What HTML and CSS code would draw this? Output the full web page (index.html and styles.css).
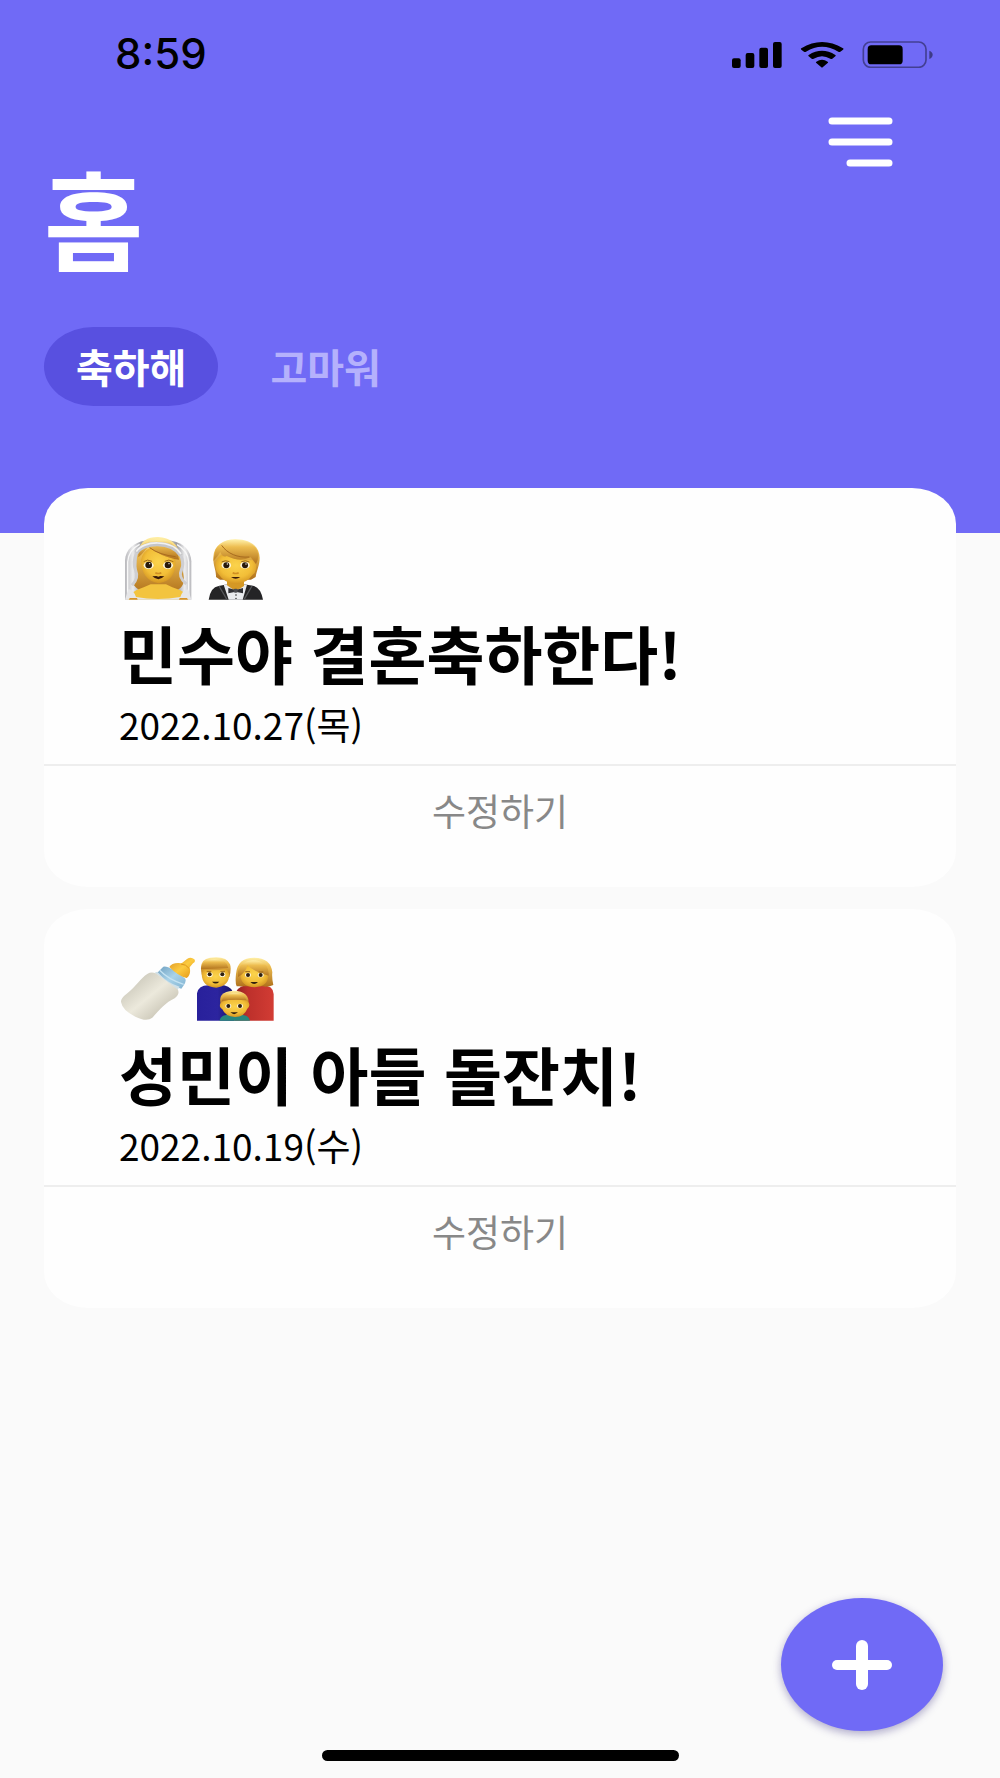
FILE: index.html
```
<!DOCTYPE html>
<html lang="ko">
<head>
  <meta charset="UTF-8">
  <meta name="viewport" content="width=device-width, initial-scale=1.0">
  <title>홈</title>
  <link rel="stylesheet" href="styles.css">
</head>
<body>
  <header class="header">
    <div class="status-bar">
      <span class="time">8:59</span>
      <div class="status-icons">
        <svg width="50" height="27" viewBox="95 62 150 81" aria-hidden="true">
          <rect x="95" y="114" width="26" height="29" rx="6"/>
          <rect x="136" y="98" width="26" height="45" rx="6"/>
          <rect x="177" y="82" width="26" height="61" rx="6"/>
          <rect x="218" y="65" width="26" height="78" rx="6"/>
        </svg>
        <svg width="44" height="27" viewBox="299 62 132 81" aria-hidden="true">
          <path d="M303 84 Q365 46 428 84 Q431 86 428 88 L420 94 Q417 96 414 94 Q365 65 317 94 Q314 96 311 94 L303 88 Q300 86 303 84Z"/>
          <path d="M325 104 Q365 79 405 104 Q408 106 405 108 L396 115 Q393 117 390 115 Q365 100 340 115 Q337 117 334 115 L325 108 Q322 106 325 104Z"/>
          <path d="M348 124 Q365 112 382 124 Q385 126 382 128 L367 141 Q365 143 363 141 L348 128 Q345 126 348 124Z"/>
        </svg>
        <svg width="71" height="27" viewBox="485 62 213 81" aria-hidden="true">
          <rect x="489" y="65" width="188" height="76" rx="22" fill="none" stroke="#000" stroke-opacity=".4" stroke-width="5"/>
          <path d="M687 91 Q697 95 697 103 Q697 111 687 116Z" fill-opacity=".45"/>
          <rect x="502" y="75" width="105" height="57" rx="11"/>
        </svg>
      </div>
    </div>
    <div class="menu-row">
      <button class="menu-button" type="button" aria-label="메뉴">
        <svg width="66" height="52" viewBox="0 0 66 52" fill="none" stroke="#fff" stroke-width="7" stroke-linecap="round">
          <path d="M5 5H62M5 26H62M23 47H62"/>
        </svg>
      </button>
    </div>
    <h1 class="title">홈</h1>
    <nav class="tabs">
      <button class="tab active" type="button">축하해</button>
      <button class="tab" type="button">고마워</button>
    </nav>
  </header>

  <main class="cards">
    <article class="card">
      <div class="card-body">
        <div class="emoji">
          <svg width="74" height="64" viewBox="27 48 222 192" aria-hidden="true">
            <defs>
              <radialGradient id="skin" cx=".5" cy=".4" r=".65">
                <stop offset="0" stop-color="#fbd34c"/>
                <stop offset=".6" stop-color="#f2be38"/>
                <stop offset="1" stop-color="#cb8a1d"/>
              </radialGradient>
              <linearGradient id="hair" x1="0" y1="0" x2="0" y2="1">
                <stop offset="0" stop-color="#fff0a8"/>
                <stop offset=".3" stop-color="#edbd50"/>
                <stop offset="1" stop-color="#b0711c"/>
              </linearGradient>
              <linearGradient id="veil" x1="0" y1="0" x2="1" y2="0">
                <stop offset="0" stop-color="#b9b9bd"/>
                <stop offset=".12" stop-color="#ececed"/>
                <stop offset=".25" stop-color="#9c9ca1"/>
                <stop offset=".5" stop-color="#ededee"/>
                <stop offset=".78" stop-color="#9c9ca1"/>
                <stop offset=".9" stop-color="#ededee"/>
                <stop offset="1" stop-color="#b9b9bd"/>
              </linearGradient>
            </defs>
            <path d="M45 239V122C46 87 73 67 104 62H184C219 67 243 91 244 124V239Z" fill="url(#veil)"/>
            <path d="M53 227V126Q56 89 89 73M236 227V126Q234 92 201 74" fill="none" stroke="#f8f8f8" stroke-width="4"/>
            <path d="M84 96C91 61 116 50 145 51C179 52 207 73 211 110C213 146 234 184 211 204C195 218 169 224 147 223C116 224 87 216 72 196C84 178 76 126 84 96Z" fill="url(#hair)"/>
            <path d="M52 239Q60 215 101 202L122 193H168L187 202Q231 215 239 239Z" fill="#f3c43f"/>
            <path d="M93 120Q98 93 122 83Q153 109 196 117Q202 181 146 190Q94 181 93 120Z" fill="url(#skin)"/>
            <path d="M85 112C100 99 108 89 114 80C140 99 169 113 207 119Q203 74 168 60Q109 53 85 88Z" fill="url(#hair)"/>
            <path d="M119 83Q148 105 197 110" fill="none" stroke="#a96b1e" stroke-width="3"/>
            <path d="M79 99C99 64 184 60 213 106" fill="none" stroke="#c5c6c9" stroke-width="13"/>
            <path d="M79 95C99 61 184 57 213 102" fill="none" stroke="#f1f1f1" stroke-width="5"/>
            <path d="M80 98Q67 128 77 151T66 196M212 106Q224 129 214 150T229 192" fill="none" stroke="#cfcfd2" stroke-width="9"/>
            <path d="M45 239L55 208Q69 207 78 231Q143 243 211 231Q220 206 235 209L244 239Z" fill="#e6e6e8"/>
            <path d="M57 239L59 234H81L83 239ZM207 239L209 234H231L234 239Z" fill="#d8952b"/>
            <path d="M101 125Q112 116 126 124M164 124Q176 116 190 125" fill="none" stroke="#9c681b" stroke-width="3"/>
            <ellipse cx="116" cy="136" rx="15" ry="11" fill="#fff8dd"/>
            <ellipse cx="174" cy="136" rx="15" ry="11" fill="#fff8dd"/>
            <circle cx="116" cy="135" r="10" fill="#28190a"/>
            <circle cx="174" cy="135" r="10" fill="#28190a"/>
            <circle cx="119" cy="131" r="2" fill="#fff"/>
            <circle cx="177" cy="131" r="2" fill="#fff"/>
            <path d="M136 158Q145 163 154 158" fill="none" stroke="#d08f22" stroke-width="5"/>
            <path d="M127 169L139 168L145 170L151 168L163 169Q145 186 127 169Z" fill="#391a08"/>
          </svg>
          <svg width="72" height="64" viewBox="249 48 216 192" aria-hidden="true">
            <path d="M296 239Q302 201 326 198L352 193H402L429 197Q452 202 459 239Z" fill="#242426"/>
            <path d="M341 194L377 190L411 194L398 239H356Z" fill="#e9ebef"/>
            <path d="M351 181H402V198L377 214L351 196Z" fill="#d49825"/>
            <path d="M327 198L351 239M426 198L402 239" stroke="#55565a" stroke-width="4"/>
            <path d="M355 204L374 209V216L355 220ZM399 204L380 209V216L399 220Z" fill="#303136"/>
            <rect x="371" y="206" width="12" height="12" rx="4" fill="#4a4b50"/>
            <circle cx="378" cy="225" r="2"/>
            <circle cx="378" cy="235" r="2"/>
            <path d="M310 112C312 75 340 58 377 58C421 58 448 79 449 113C449 136 440 150 437 171L423 179H330L318 171C319 151 309 137 310 112Z" fill="url(#hair)"/>
            <path d="M317 127Q320 115 333 105L344 99Q383 124 428 120L439 134Q440 156 428 164Q410 190 377 192Q342 188 327 164Q314 151 317 127Z" fill="url(#skin)"/>
            <path d="M310 123Q324 109 331 96Q338 114 350 108Q390 128 422 112L438 132Q453 103 436 82Q415 59 374 59Q327 62 316 91Z" fill="url(#hair)"/>
            <path d="M335 76C352 101 383 114 418 111" fill="none" stroke="#a76b1f" stroke-width="3"/>
            <path d="M335 126Q346 119 358 125M394 125Q407 119 418 126" fill="none" stroke="#93631d" stroke-width="3"/>
            <ellipse cx="349" cy="136" rx="14" ry="10" fill="#fff8dd"/>
            <ellipse cx="405" cy="136" rx="14" ry="10" fill="#fff8dd"/>
            <circle cx="349" cy="136" r="9" fill="#28190a"/>
            <circle cx="405" cy="136" r="9" fill="#28190a"/>
            <circle cx="352" cy="132" r="2" fill="#fff"/>
            <circle cx="408" cy="132" r="2" fill="#fff"/>
            <path d="M368 158Q377 163 386 158" fill="none" stroke="#d08f22" stroke-width="5"/>
            <path d="M363 171H391Q377 182 363 171Z" fill="#391a08"/>
          </svg>
        </div>
        <h2 class="card-title">민수야 결혼축하한다!</h2>
        <p class="date">2022.10.27(목)</p>
      </div>
      <button class="edit" type="button">수정하기</button>
    </article>

    <article class="card">
      <div class="card-body">
        <div class="emoji">
          <svg width="76" height="64" viewBox="27 36 228 192" aria-hidden="true">
            <defs>
              <linearGradient id="milk" x1="0" y1="0" x2="1" y2="1">
                <stop offset="0" stop-color="#bbb8aa"/>
                <stop offset=".5" stop-color="#ece9dc"/>
                <stop offset="1" stop-color="#b5b09f"/>
              </linearGradient>
              <linearGradient id="ring" x1="0" y1="0" x2="1" y2="1">
                <stop offset="0" stop-color="#6e9fc0"/>
                <stop offset=".5" stop-color="#a9d3e9"/>
                <stop offset="1" stop-color="#80b2d1"/>
              </linearGradient>
              <linearGradient id="nipple" x1="0" y1="0" x2="1" y2="1">
                <stop offset="0" stop-color="#d99022"/>
                <stop offset=".5" stop-color="#fccb40"/>
                <stop offset="1" stop-color="#e08f10"/>
              </linearGradient>
            </defs>
            <path d="M142 83L160 65Q176 60 226 101Q231 109 214 131Q182 125 142 83Z" fill="url(#ring)"/>
            <path d="M134 83L142 80Q168 112 209 125L203 134Z" fill="#cfe0e8"/>
            <path d="M113 86Q124 80 137 85L203 133Q211 147 194 160C167 172 151 193 127 218Q110 232 76 215Q37 196 33 171Q32 160 52 145C80 122 91 100 113 86Z" fill="url(#milk)"/>
            <path d="M149 76Q177 105 221 118" fill="none" stroke="#c5e3f2" stroke-width="4"/>
            <path d="M178 66Q187 51 215 55L231 42Q243 34 253 43Q258 50 249 55L239 67Q244 89 230 99Q204 93 178 66Z" fill="url(#nipple)"/>
            <path d="M213 57Q229 58 237 70" fill="none" stroke="#dc951a" stroke-width="3"/>
          </svg>
          <svg width="80" height="64" viewBox="255 36 240 192" aria-hidden="true">
            <defs>
              <linearGradient id="blue" x1="0" y1="0" x2="1" y2="0">
                <stop offset="0" stop-color="#28209b"/>
                <stop offset=".55" stop-color="#2c249f"/>
                <stop offset="1" stop-color="#15125f"/>
              </linearGradient>
              <linearGradient id="red" x1="0" y1="0" x2="1" y2="0">
                <stop offset="0" stop-color="#8c1e20"/>
                <stop offset=".35" stop-color="#bd302b"/>
                <stop offset="1" stop-color="#d23c34"/>
              </linearGradient>
            </defs>
            <path d="M261 227V145Q266 120 297 121H342Q370 126 373 157V227Z" fill="url(#blue)"/>
            <path d="M373 227V158Q377 125 408 121H457Q490 122 491 147V227Z" fill="url(#red)"/>
            <path d="M275 87Q265 43 300 38Q349 31 360 58Q365 71 358 96H278Z" fill="url(#hair)"/>
            <path d="M279 73Q310 79 350 72L358 88Q357 124 319 128Q276 126 275 87Z" fill="url(#skin)"/>
            <path d="M273 73Q310 71 355 69Q351 43 314 42Q274 42 273 73Z" fill="url(#hair)"/>
            <path d="M380 124Q375 114 378 87Q382 38 432 38Q483 39 487 82Q485 98 490 120Q475 127 458 124Z" fill="url(#hair)"/>
            <path d="M391 89Q396 68 414 60Q435 83 474 91Q476 123 434 127Q392 124 391 89Z" fill="url(#skin)"/>
            <path d="M384 96Q408 83 412 61Q434 81 476 92Q479 59 447 48Q398 38 384 78Z" fill="url(#hair)"/>
            <path d="M328 227Q334 209 352 210H400Q417 212 420 227Z" fill="#28877d"/>
            <path d="M333 180Q320 140 370 137Q421 138 415 179Z" fill="url(#hair)"/>
            <path d="M332 173Q344 163 360 165Q385 162 410 166Q425 180 412 191Q402 217 374 216Q346 215 337 193Q325 185 332 173Z" fill="url(#skin)"/>
            <path d="M335 168Q368 162 410 166Q403 143 371 143Q341 145 335 168Z" fill="url(#hair)"/>
            <g fill="#fff8dc">
              <ellipse cx="299" cy="89" rx="9" ry="7"/><ellipse cx="337" cy="89" rx="9" ry="7"/>
              <ellipse cx="414" cy="90" rx="9" ry="7"/><ellipse cx="452" cy="90" rx="9" ry="7"/>
              <ellipse cx="355" cy="183" rx="9" ry="7"/><ellipse cx="390" cy="183" rx="9" ry="7"/>
            </g>
            <g fill="#31200e">
              <circle cx="299" cy="88" r="6"/><circle cx="337" cy="88" r="6"/>
              <circle cx="414" cy="90" r="6"/><circle cx="452" cy="90" r="6"/>
              <circle cx="355" cy="183" r="6"/><circle cx="390" cy="183" r="6"/>
              <path d="M306 110H328Q317 121 306 110ZM421 111H444Q432 123 421 111ZM361 202H384Q372 213 361 202Z"/>
            </g>
            <path d="M290 79H304M331 79H345M406 80H420M446 81H460" stroke="#98661d" stroke-width="3"/>
          </svg>
        </div>
        <h2 class="card-title">성민이 아들 돌잔치!</h2>
        <p class="date">2022.10.19(수)</p>
      </div>
      <button class="edit" type="button">수정하기</button>
    </article>
  </main>

  <button class="add-button" type="button" aria-label="추가">
    <svg width="62" height="52" viewBox="0 0 62 52" fill="#fff">
      <rect x="1" y="21" width="60" height="10" rx="5"/>
      <rect x="25" y="1" width="12" height="50" rx="6"/>
    </svg>
  </button>
  <div class="home-indicator"></div>
</body>
</html>
```
FILE: styles.css
```
* {
  margin: 0;
  padding: 0;
  box-sizing: border-box;
}

body {
  min-height: 100vh;
  background: #fafafa;
  color: #000;
  font-family: "Noto Sans CJK KR", sans-serif;
}

button {
  border: none;
  background: none;
  font-family: inherit;
  cursor: pointer;
}

svg {
  display: block;
}

.header {
  padding-bottom: 127px;
  background: #706af6;
}

.status-bar {
  display: flex;
  align-items: center;
  justify-content: space-between;
  height: 108px;
  padding: 0 67px 0 115px;
}

.time {
  font-family: Inter, sans-serif;
  font-size: 42px;
  font-weight: 500;
  line-height: 48px;
}

.status-icons {
  display: flex;
  gap: 18px;
}

.menu-row {
  display: flex;
  justify-content: flex-end;
  padding: 8px 107px 0;
}

.title {
  padding: 0 44px;
  color: #fff;
  font-size: 108px;
  font-weight: 700;
  line-height: 96px;
}

.tabs {
  display: flex;
  gap: 20px;
  margin-top: 63px;
  padding: 0 44px;
}

.tab {
  padding: 15px 32px 16px;
  border-radius: 50px / 40px;
  color: #b5b1fc;
  font-size: 40px;
  font-weight: 700;
  line-height: 48px;
}

.tab.active {
  background: #5850e0;
  color: #fff;
}

.cards {
  display: flex;
  flex-direction: column;
  gap: 22px;
  margin-top: -45px;
  padding: 0 44px 200px;
}

.card {
  border-radius: 44px / 36px;
  background: #fefefe;
  overflow: hidden;
}

.card-body {
  padding: 48px 75px 16px;
  border-bottom: 2px solid #eee;
}

.emoji {
  display: flex;
}

.card-title {
  margin-top: 12px;
  font-size: 63px;
  font-weight: 700;
  line-height: 80px;
}

.date {
  margin-top: 8px;
  font-size: 37px;
  line-height: 48px;
}

.edit {
  display: block;
  width: 100%;
  padding: 20px 0 53px;
  color: #888;
  font-size: 37px;
  line-height: 48px;
}

/* floating over the list */
.add-button {
  position: fixed;
  right: 57px;
  bottom: 47px;
  display: flex;
  align-items: center;
  justify-content: center;
  width: 162px;
  height: 133px;
  border-radius: 50%;
  background: #706af6;
  box-shadow: 0 3px 8px rgba(60, 50, 130, 0.4);
}

.home-indicator {
  position: fixed;
  bottom: 17px;
  left: 50%;
  width: 357px;
  height: 11px;
  margin-left: -178px;
  border-radius: 6px;
  background: #000;
}
```
